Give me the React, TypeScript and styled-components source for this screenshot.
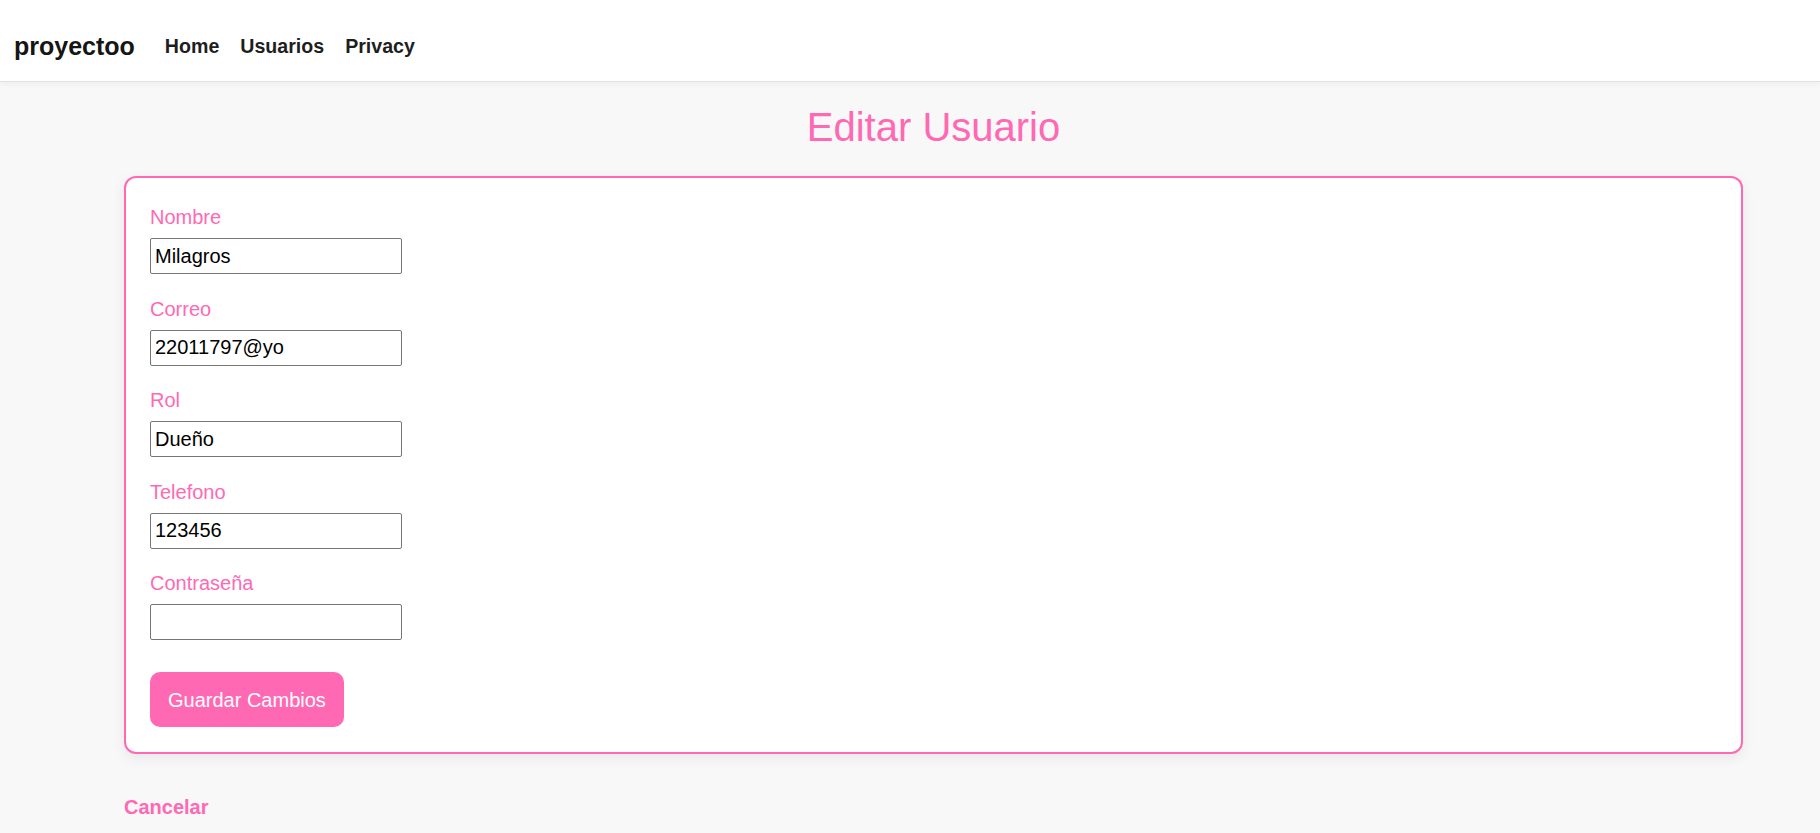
import React from "react";
import styled, { createGlobalStyle } from "styled-components";

const GlobalStyle = createGlobalStyle`
  html, body {
    margin: 0;
    padding: 0;
    background: #f8f8f8;
    font-family: "Liberation Sans", Arial, sans-serif;
  }
  * { box-sizing: border-box; }
`;

const Navbar = styled.nav`
  height: 82px;
  background: #ffffff;
  border-bottom: 1px solid #e2e2e2;
  box-shadow: 0 2px 6px rgba(0, 0, 0, 0.05);
  display: flex;
  align-items: center;
  padding: 12px 14px 0;
`;

const Brand = styled.a`
  font-size: 25px;
  font-weight: 700;
  color: #151515;
  text-decoration: none;
  margin-right: 30px;
`;

const NavLinks = styled.div`
  display: flex;
  gap: 21px;
`;

const NavLink = styled.a`
  font-size: 19.6px;
  font-weight: 700;
  color: #1e1e1e;
  text-decoration: none;
`;

const Main = styled.main`
  padding: 0 77px 0 124px;
`;

const Title = styled.h1`
  margin: 22px 0 26px;
  text-align: center;
  font-size: 40px;
  font-weight: 400;
  line-height: 46px;
  color: #ff69b4;
`;

const Card = styled.form`
  background: #ffffff;
  border: 2px solid #ff69b4;
  border-radius: 12px;
  padding: 24px 24px 25px;
  box-shadow: 0 4px 14px rgba(0, 0, 0, 0.07);
`;

const Group = styled.div`
  margin-bottom: 19.5px;
`;

const Label = styled.label`
  display: block;
  font-size: 20px;
  line-height: 30px;
  color: #ff69b4;
  margin-bottom: 6px;
`;

const Input = styled.input`
  display: block;
  width: 252px;
  height: 36px;
  padding: 5px 4px;
  font-family: "Liberation Sans", Arial, sans-serif;
  font-size: 20px;
  color: #000;
  background: #fff;
  border: 1px solid #767676;
  border-radius: 2px;
`;

const SaveButton = styled.button`
  display: block;
  margin-top: 32px;
  height: 55px;
  padding: 0 18px;
  font-family: "Liberation Sans", Arial, sans-serif;
  font-size: 20px;
  line-height: 24px;
  color: #ffffff;
  background: #ff69b4;
  border: none;
  border-radius: 10px;
  cursor: pointer;
`;

const CancelLink = styled.a`
  display: inline-block;
  margin-top: 42px;
  font-size: 20px;
  line-height: 23px;
  font-weight: 700;
  color: #ff69b4;
  text-decoration: none;
`;

const fields = [
  { label: "Nombre", value: "Milagros", type: "text" },
  { label: "Correo", value: "22011797@yo", type: "text" },
  { label: "Rol", value: "Dueño", type: "text" },
  { label: "Telefono", value: "123456", type: "text" },
  { label: "Contraseña", value: "", type: "password" },
];

export default function App() {
  return (
    <>
      <GlobalStyle />
      <Navbar>
        <Brand href="#">proyectoo</Brand>
        <NavLinks>
          <NavLink href="#">Home</NavLink>
          <NavLink href="#">Usuarios</NavLink>
          <NavLink href="#">Privacy</NavLink>
        </NavLinks>
      </Navbar>
      <Main>
        <Title>Editar Usuario</Title>
        <Card onSubmit={(e) => e.preventDefault()}>
          {fields.map((f) => (
            <Group key={f.label}>
              <Label>{f.label}</Label>
              <Input type={f.type} defaultValue={f.value} />
            </Group>
          ))}
          <SaveButton type="submit">Guardar Cambios</SaveButton>
        </Card>
        <CancelLink href="#">Cancelar</CancelLink>
      </Main>
    </>
  );
}
